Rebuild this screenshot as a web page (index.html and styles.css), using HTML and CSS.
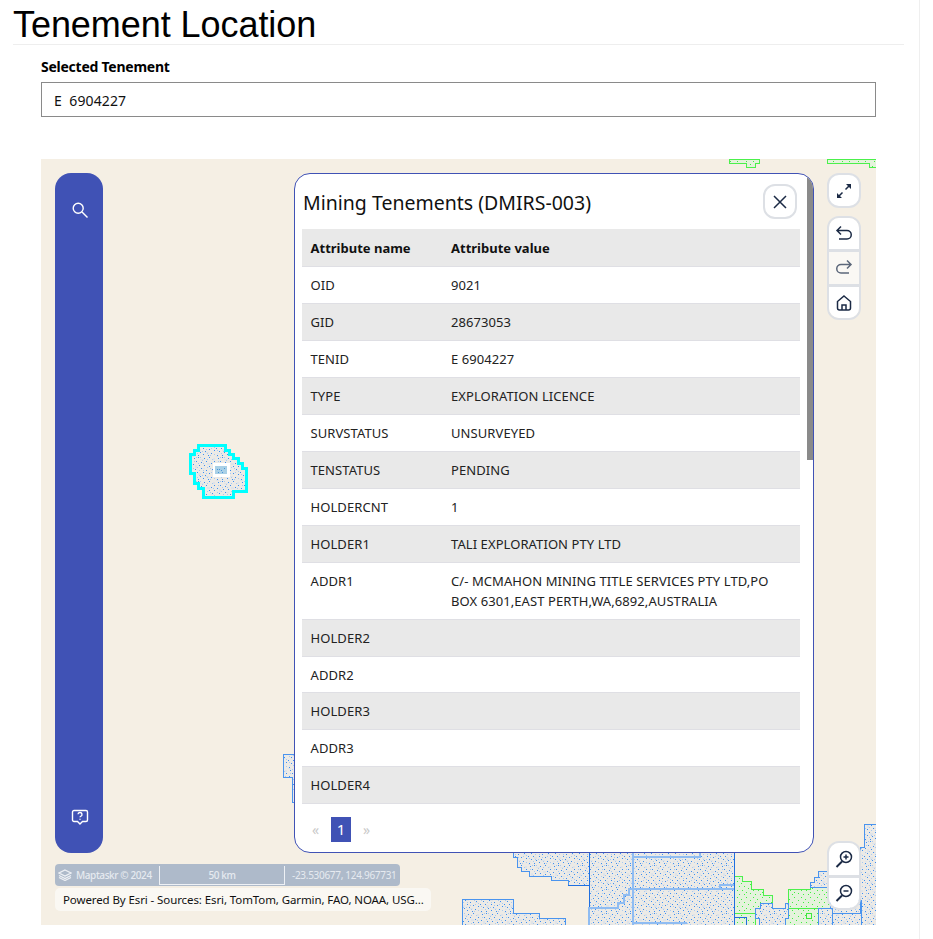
FILE: index.html
```html
<!DOCTYPE html>
<html lang="en">
<head>
<meta charset="utf-8">
<title>Tenement Location</title>
<link rel="stylesheet" href="styles.css">
</head>
<body>
<div class="edge"></div>
<main class="page">
  <h1 class="title">Tenement Location</h1>
  <section class="field">
    <label class="field-label">Selected Tenement</label>
    <div class="field-input">E&nbsp; 6904227</div>
  </section>
  <section class="map">
    <svg class="map-art" viewBox="41 159 835 766" width="835" height="766" shape-rendering="crispEdges">
      <defs>
        <pattern id="dots" width="24" height="24" patternUnits="userSpaceOnUse">
          <rect width="24" height="24" fill="#eceae6"/>
          <path fill="#dfe3e8" d="M0 0h3v1H0zM8 3h4v1H8zM15 7h3v2h-3zM3 9h2v3H3zM10 12h3v1h-3zM19 14h3v1h-3zM6 17h3v2H6zM13 20h4v1h-4zM21 2h2v2h-2zM1 21h2v1H1z"/>
          <path fill="#3d8ff2" d="M2 2h1v1H2zM6 1h1v1H6zM12 2h1v1h-1zM17 1h1v1h-1zM22 5h1v1h-1zM4 5h1v1H4zM9 6h1v1H9zM14 5h1v1h-1zM19 7h1v1h-1zM1 8h1v1H1zM7 9h1v1H7zM12 9h1v1h-1zM17 10h1v1h-1zM22 10h1v1h-1zM3 13h1v1H3zM9 12h1v1H9zM14 14h1v1h-1zM20 13h1v1h-1zM0 16h1v1H0zM5 16h1v1H5zM11 16h1v1h-1zM17 17h1v1h-1zM22 18h1v1h-1zM3 19h1v1H3zM8 20h1v1H8zM13 19h1v1h-1zM19 21h1v1h-1zM1 23h1v1H1zM6 23h1v1H6zM11 22h1v1h-1zM16 23h1v1h-1z"/>
          <path fill="#a9caf2" d="M4 1h1v1H4zM10 4h1v1h-1zM20 3h1v1h-1zM6 7h1v1H6zM15 11h1v1h-1zM1 12h1v1H1zM11 14h1v1h-1zM19 16h1v1h-1zM7 19h1v1H7zM15 21h1v1h-1zM22 22h1v1h-1zM8 1h1v1H8zM15 3h1v1h-1zM2 5h1v1H2zM11 7h1v1h-1zM21 8h1v1h-1zM5 11h1v1H5zM18 12h1v1h-1zM7 14h1v1H7zM22 15h1v1h-1zM14 17h1v1h-1zM1 18h1v1H1zM10 19h1v1h-1zM5 21h1v1H5zM18 23h1v1h-1z"/>
        </pattern>
        <pattern id="greendots" width="16" height="16" patternUnits="userSpaceOnUse">
          <rect width="16" height="16" fill="#e4f3dc"/>
          <path fill="#3ff03f" d="M1 1h1v1H1zM5 3h1v1H5zM10 1h1v1h-1zM14 4h1v1h-1zM3 6h1v1H3zM8 6h1v1H8zM12 8h1v1h-1zM1 10h1v1H1zM6 10h1v1H6zM10 12h1v1h-1zM14 13h1v1h-1zM3 14h1v1H3zM8 14h1v1H8z"/>
        </pattern>
      </defs>
      <g class="geo-green">
        <path d="M729 159H759V163H755V167H746V163H729Z"/>
        <path d="M827 159H876V167H869V163H827Z"/>
        <path d="M734 876H742V881H751V889H763V895H772V913H734Z"/>
        <path d="M734 913H755V925H734Z"/>
        <path d="M788 889H810V887H830V908H788Z"/>
        <path d="M788 908H818V925H785V918H788Z"/>
      </g>
      <rect class="geo-greenbox" x="806" y="913" width="5" height="5"/>
      <g class="geo-blue">
        <path d="M283 754H296V802H292V777H283Z" />
        <path d="M513 845H589V885H568V880H551V876H529V871H521V867H517V857H513Z"/>
        <path d="M462 899H513V913H539V918H565V925H462Z"/>
        <path d="M755 908H760V903H772V908H785V903H788V918H785V925H759V918H755Z"/>
        <path d="M810 882H814V877H818V871H830V887H810Z"/>
        <path d="M818 908H832V925H818Z"/>
        <path d="M832 913H861V925H832Z"/>
        <path d="M860 847H864V824H876V925H861V900H858V871H860Z"/>
        <path d="M830 887H860V913H832V908H830Z"/>
      </g>
      <path class="geo-block" d="M589 845H734V925H589Z"/>
      <path class="geo-inner" d="M633 845V925M633 857H700V845M633 889H734M633 923H687M720 889V885H734M589 925V908H618V903H624V895H629V889H633"/>
      <path class="geo-line" d="M568 885H589M734 917H746V925"/>
      <path class="geo-selected" d="M198 445H225V450H229V454H233V458H238V463H242V468H246V491H233V497H203V488H198V483H194V473H190V454H194V450H198Z"/>
      <rect class="geo-selbox" x="213" y="463" width="17" height="14"/>
      <rect class="geo-selcore" x="215" y="466" width="12" height="8"/>
      <path class="geo-seldots" d="M217 469h1v1h-1zM219 469h1v1h-1zM221 470h1v1h-1zM224 468h1v1h-1zM218 472h1v1h-1zM222 472h1v1h-1z"/>
    </svg>

    <aside class="rail">
      <svg class="rail-icon" viewBox="0 0 18 18" width="18" height="18"><circle cx="7.2" cy="7.2" r="5" /><path d="M11 11l5.5 5.5"/></svg>
      <svg class="rail-icon" viewBox="0 0 18 18" width="18" height="18"><path d="M3 2.500h12a1.500 1.500 0 0 1 1.500 1.500v8a1.500 1.500 0 0 1-1.500 1.500h-3.500L9 16l-2.500-2.500H3A1.500 1.500 0 0 1 1.500 12V4A1.500 1.500 0 0 1 3 2.500z"/><path d="M7 6.300a2 2 0 1 1 2.700 2c-.5.200-.7.500-.7 1"/><path d="M9 10.800v.9"/></svg>
    </aside>

    <section class="popup">
      <header class="popup-head">
        <h2 class="popup-title">Mining Tenements (DMIRS-003)</h2>
        <button class="ctl ctl-close"><svg viewBox="0 0 16 16" width="16" height="16"><path d="M2 2l12 12M14 2L2 14"/></svg></button>
      </header>
      <div class="popup-scroll">
        <table class="attrs">
          <thead><tr><th>Attribute name</th><th>Attribute value</th></tr></thead>
          <tbody>
            <tr><td>OID</td><td>9021</td></tr>
            <tr><td>GID</td><td>28673053</td></tr>
            <tr><td>TENID</td><td>E 6904227</td></tr>
            <tr><td>TYPE</td><td>EXPLORATION LICENCE</td></tr>
            <tr><td>SURVSTATUS</td><td>UNSURVEYED</td></tr>
            <tr><td>TENSTATUS</td><td>PENDING</td></tr>
            <tr><td>HOLDERCNT</td><td>1</td></tr>
            <tr><td>HOLDER1</td><td>TALI EXPLORATION PTY LTD</td></tr>
            <tr><td>ADDR1</td><td>C/- MCMAHON MINING TITLE SERVICES PTY LTD,PO BOX 6301,EAST PERTH,WA,6892,AUSTRALIA</td></tr>
            <tr><td>HOLDER2</td><td></td></tr>
            <tr><td>ADDR2</td><td></td></tr>
            <tr><td>HOLDER3</td><td></td></tr>
            <tr><td>ADDR3</td><td></td></tr>
            <tr><td>HOLDER4</td><td></td></tr>
          </tbody>
        </table>
      </div>
      <div class="scrollbar"></div>
      <nav class="pager"><span class="pager-arrow">«</span><span class="pager-num">1</span><span class="pager-arrow">»</span></nav>
    </section>

    <div class="controls controls-top">
      <button class="ctl ctl-single"><svg viewBox="0 0 18 18" width="18" height="18"><path d="M10.500 7.500L15 3M7.500 10.500L3 15"/><path class="solid" d="M11 2h5v5zM2 11v5h5z"/></svg></button>
      <div class="ctl-group">
        <button class="ctl"><svg viewBox="0 0 18 18" width="18" height="18"><path d="M6 1.500L2 5.500l4 4M2 5.500h10a3.800 3.800 0 0 1 0 8.500H4"/></svg></button>
        <button class="ctl ctl-off"><svg viewBox="0 0 18 18" width="18" height="18"><path d="M12 1.500l4 4-4 4M16 5.500H6a3.800 3.800 0 0 0 0 8.500h8"/></svg></button>
        <button class="ctl"><svg viewBox="0 0 18 18" width="18" height="18"><path d="M9 2L15.500 7.500V14a2 2 0 0 1-2 2h-9a2 2 0 0 1-2-2V7.500z"/><path d="M7 16v-5h4v5"/></svg></button>
      </div>
    </div>

    <div class="ctl-group controls-zoom">
      <button class="ctl"><svg viewBox="0 0 18 18" width="18" height="18"><circle cx="11" cy="7" r="5.500"/><path class="thick" d="M7 11.500L1.500 17"/><path d="M8.500 7h5M11 4.500v5"/></svg></button>
      <button class="ctl"><svg viewBox="0 0 18 18" width="18" height="18"><circle cx="11" cy="7" r="5.500"/><path class="thick" d="M7 11.500L1.500 17"/><path d="M8.500 7h5"/></svg></button>
    </div>

    <div class="scale">
      <svg class="scale-logo" viewBox="0 0 14 12" width="14" height="12"><path d="M7 1l6 3-6 3-6-3z"/><path d="M1 6.500l6 3 6-3M1 8.500l6 3 6-3"/></svg>
      <span class="scale-brand">Maptaskr © 2024</span>
      <span class="scale-bar">50 km</span>
      <span class="scale-coord">-23.530677, 124.967731</span>
    </div>
    <div class="attribution">Powered By Esri - Sources: Esri, TomTom, Garmin, FAO, NOAA, USG...</div>
  </section>
</main>
</body>
</html>
```
FILE: styles.css
```css
* { box-sizing: border-box; }
html, body { margin: 0; height: 939px; overflow: hidden; background: #fff; }
body { font-family: "Noto Sans", sans-serif; color: #111; position: relative; }
.edge { position: absolute; top: 0; bottom: 0; left: 919px; width: 1px; background: #efefef; }
.page { width: 904px; padding-left: 13px; }
.title {
  margin: 0; height: 45px; padding-top: 4px;
  font: 400 36px/41px "Liberation Sans", Arial, sans-serif; color: #000; letter-spacing: -.06px;
  border-bottom: 1px solid #eee;
}
.field { margin: 13px 0 0 28px; width: 835px; }
.field-label { display: block; font-size: 14px; line-height: 18px; font-weight: 700; letter-spacing: -.25px; color: #000; }
.field-input {
  margin-top: 6px; height: 35px; padding-left: 12px;
  border: 1px solid #8a8a8a; font-size: 14px; line-height: 35px; letter-spacing: .1px; color: #111;
}
.map {
  position: relative; margin: 42px 0 0 28px; width: 835px; height: 766px;
  background: #f5efe4; overflow: hidden;
}
.map-art { position: absolute; inset: 0; display: block; }
.geo-green path { fill: url(#greendots); stroke: #4cf04c; stroke-width: 1; }
.geo-greenbox { fill: none; stroke: #3ee83e; stroke-width: 1; }
.geo-blue path { fill: url(#dots); stroke: #4a94ee; stroke-width: 1; }
.geo-block { fill: url(#dots); stroke: #1f6fe0; stroke-width: 1; }
.geo-inner { fill: none; stroke: #8fbcf2; stroke-width: 2; }
.geo-line { fill: none; stroke: #1f6fe0; stroke-width: 1; }
.geo-selected { fill: url(#dots); stroke: #0ff; stroke-width: 3; }
.geo-selbox { fill: #fff; }
.geo-selcore { fill: #a9d0e6; }
.geo-seldots { fill: #4a94d8; }

.rail {
  position: absolute; left: 14px; top: 14px; width: 48px; height: 680px;
  background: #4052b5; border-radius: 16px;
  display: flex; flex-direction: column; align-items: center; justify-content: space-between;
  padding: 28px 0 27px 1px;
}
.rail-icon { fill: none; stroke: #fff; stroke-width: 1.4; }

.popup {
  position: absolute; left: 253px; top: 14px; width: 520px; height: 680px;
  background: #fff; border: 1px solid #4052b5; border-radius: 16px; overflow: hidden;
  display: flex; flex-direction: column;
}
.popup-head { display: flex; align-items: center; justify-content: space-between; height: 55px; padding: 0 16px 0 8px; flex: none; }
.popup-title { margin: 0; padding-top: 2px; font-size: 19.500px; line-height: 26px; font-weight: 400; color: #111; }
.popup-scroll { flex: none; height: 575px; margin-left: 7px; width: 498px; overflow: hidden; }
.attrs { width: 498px; border-collapse: collapse; table-layout: fixed; font-size: 13px; color: #222; letter-spacing: .08px; }
.attrs th, .attrs td { padding: 8px 8px 8px 8.500px; text-align: left; vertical-align: top; line-height: 20px; border-bottom: 1px solid #dfdfe4; height: 37px; font-weight: 400; }
.attrs th { padding-top: 9px; padding-bottom: 7px; font-weight: 700; color: #111; letter-spacing: 0; }
.attrs th:first-child, .attrs td:first-child { width: 140.500px; }
.attrs thead tr, .attrs tbody tr:nth-child(even) { background: #e9e9e9; }
.attrs tbody tr:nth-child(11) td { padding-bottom: 7px; height: 36px; }
.scrollbar { position: absolute; right: 0; top: 0; width: 6px; height: 286px; background: #8a8a8a; }
.pager { display: flex; align-items: center; margin: 13px 0 0 16px; height: 25px; gap: 11px; font-size: 14px; line-height: 25px; }
.pager-arrow { color: #c9c9c9; width: 9px; text-align: center; }
.pager-num { width: 20px; height: 25px; background: #4052b5; color: #fff; font-size: 15px; text-align: center; }

.ctl {
  display: flex; align-items: center; justify-content: center; padding: 0;
  width: 34px; height: 34px; background: #fff; border: 0; border-bottom: 3px solid #dde0e5; 
}
.ctl svg { fill: none; stroke: #1b2a45; stroke-width: 1.500; }
.ctl svg .solid { fill: #1b2a45; stroke: none; }
.ctl svg .thick { stroke-width: 2; }
.ctl-close { width: 34px; height: 35px; border: 2px solid #dde0e5; border-radius: 12px; }
.ctl-single { height: 35px; border: 2px solid #dde0e5; border-radius: 12px; }
.ctl-group { display: flex; flex-direction: column; border: 2px solid #dde0e5; border-radius: 12px; overflow: hidden; }
.ctl-group .ctl { width: 30px; }
.ctl-group .ctl:last-child { border-bottom: 0; height: 31px; }
.ctl-off { background: #faf8f4; height: 35px; }
.ctl-off svg { stroke: #5c677a; }
.controls { position: absolute; left: 786px; display: flex; flex-direction: column; gap: 8px; }
.controls-top { top: 14px; width: 34px; }
.controls-zoom { position: absolute; left: 786px; top: 682px; width: 34px; }
.controls-zoom .ctl { height: 35px; }
.controls-zoom .ctl:last-child { height: 30px; }

.scale {
  position: absolute; left: 14px; top: 705px; width: 345px; height: 22px;
  background: #aebaca; border-radius: 4px; display: flex; align-items: center;
  color: #e6eaf0; font-size: 10px; padding-left: 3px; letter-spacing: -.4px;
}
.scale-logo { fill: none; stroke: #eef1f5; stroke-width: 1.200; margin-right: 4px; }
.scale-brand { width: 83px; font-weight: 500; }
.scale-bar {
  width: 126px; height: 19px; line-height: 18px; text-align: center;
  border: 1px solid #eef1f5; border-top: 0; font-weight: 500;
}
.scale-coord { margin-left: 7px; font-weight: 400; white-space: nowrap; letter-spacing: -.3px; }
.attribution {
  position: absolute; left: 14px; top: 729px; width: 376px; height: 23px;
  background: #faf8f3; border-radius: 5px; padding-left: 8px;
  font-size: 11.500px; line-height: 23px; color: #111; white-space: nowrap; letter-spacing: -.1px;
}
```
